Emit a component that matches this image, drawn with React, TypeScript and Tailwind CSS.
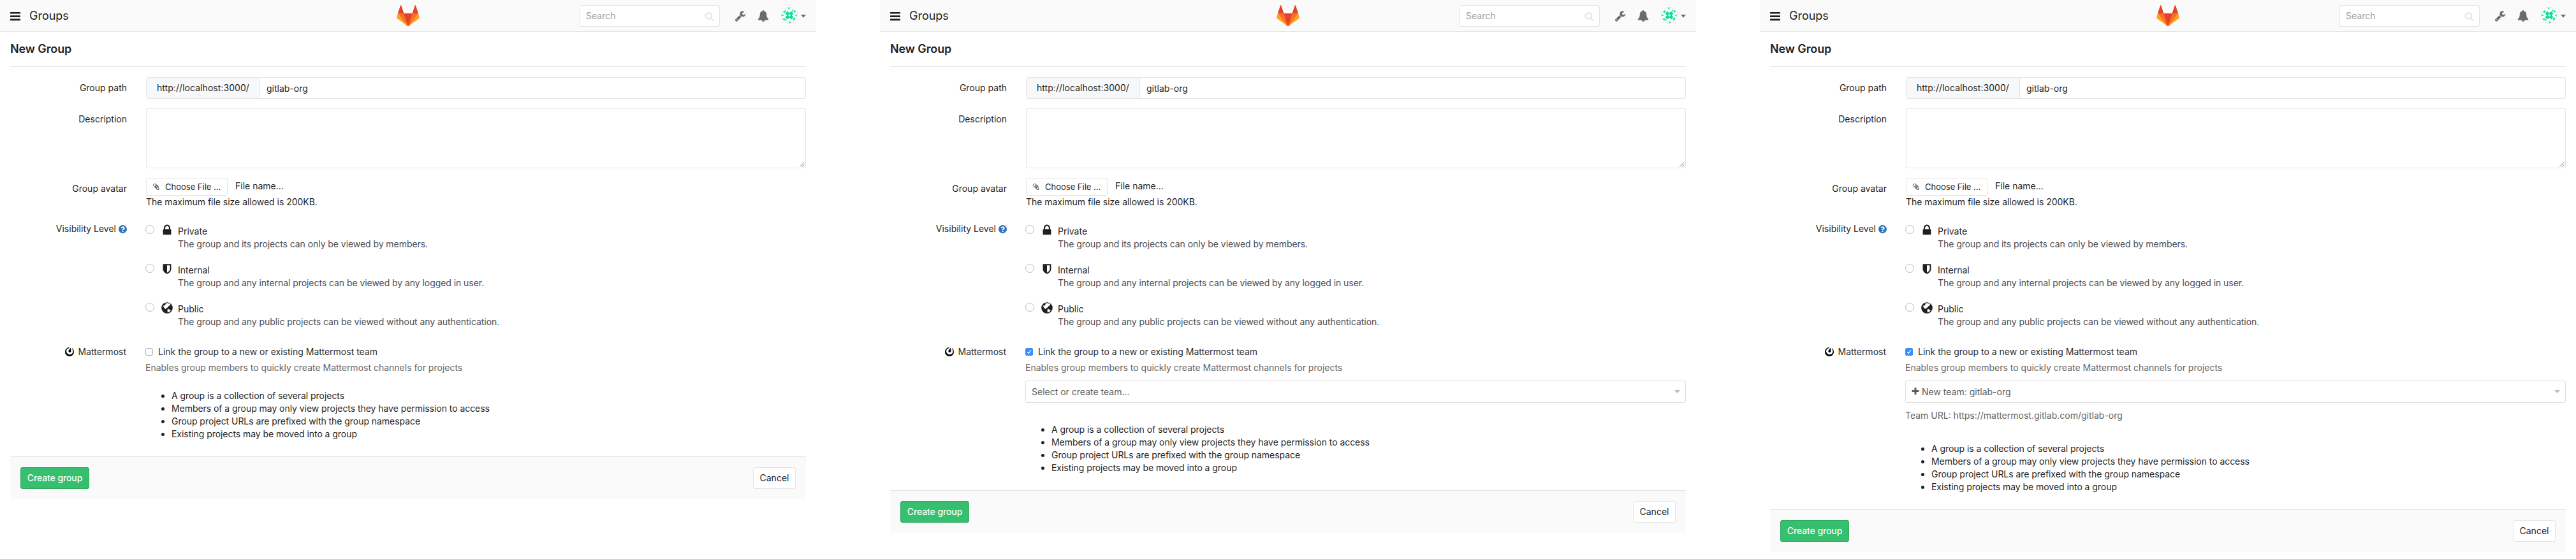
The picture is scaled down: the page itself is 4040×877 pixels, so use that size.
import type { ReactNode } from 'react';
import { SiMattermost } from 'react-icons/si';

type TeamField = 'none' | 'placeholder' | 'new-team';

function Glyph({ d, className }: { d: string; className: string }) {
  return (
    <svg viewBox="0 0 1792 1792" fill="currentColor" className={`shrink-0 ${className}`}>
      <path d={d} />
    </svg>
  );
}

const LOCK =
  'M640 768h512v-192q0-106-75-181t-181-75-181 75-75 181v192zm832 96v576q0 40-28 68t-68 28h-960q-40 0-68-28t-28-68v-576q0-40 28-68t68-28h32v-192q0-184 132-316t316-132 316 132 132 316v192h32q40 0 68 28t28 68z';
const WRENCH =
  'M448 1472q0-26-19-45t-45-19-45 19-19 45 19 45 45 19 45-19 19-45zm644-420l-682 682q-37 37-90 37-52 0-91-37l-106-108q-38-36-38-90 0-53 38-91l681-681q39 98 114.5 173.5t173.5 114.5zm634-435q0 39-23 106-47 134-164.5 217.5t-258.5 83.5q-185 0-316.5-131.5t-131.5-316.5 131.5-316.5 316.5-131.5q58 0 121.5 16.5t107.5 46.5q16 11 16 28t-16 28l-293 169v224l193 107q5-3 79-48.5t135.5-81 70.5-35.5q15 0 23.5 10t8.5 25z';
const BELL =
  'M912 1696q0-16-16-16-59 0-101.5-42.5t-42.5-101.5q0-16-16-16t-16 16q0 73 51.5 124.5t124.5 51.5q16 0 16-16zm816-288q0 52-38 90t-90 38h-448q0 106-75 181t-181 75-181-75-75-181h-448q-52 0-90-38t-38-90q50-42 91-88t85-119.5 74.5-158.5 50-206 19.5-260q0-152 117-282.5t307-158.5q-8-19-8-39 0-40 28-68t68-28 68 28 28 68q0 20-8 39 190 28 307 158.5t117 282.5q0 139 19.5 260t50 206 74.5 158.5 85 119.5 91 88z';
const SEARCH =
  'M1216 832q0-185-131.5-316.5t-316.5-131.5-316.5 131.5-131.5 316.5 131.5 316.5 316.5 131.5 316.5-131.5 131.5-316.5zm512 832q0 52-38 90t-90 38q-54 0-90-38l-343-342q-179 124-399 124-143 0-273.5-55.5t-225-150-150-225-55.5-273.5 55.5-273.5 150-225 225-150 273.5-55.5 273.5 55.5 225 150 150 225 55.5 273.5q0 220-124 399l343 343q37 37 37 90z';
const QUESTION =
  'M1024 1376v-192q0-14-9-23t-23-9h-192q-14 0-23 9t-9 23v192q0 14 9 23t23 9h192q14 0 23-9t9-23zm256-672q0-88-55.5-163t-138.5-116-170-41q-243 0-371 213-15 24 8 42l132 100q7 6 19 6 16 0 25-12 53-68 86-92 34-24 86-24 48 0 85.5 26t37.5 59q0 38-20 61t-68 45q-63 28-115.5 86.5t-52.5 125.5v36q0 14 9 23t23 9h192q14 0 23-9t9-23q0-19 21.5-49.5t54.5-49.5q32-18 49-28.5t46-35 44.5-48 28-60.5 12.5-81zm384 192q0 209-103 385.5t-279.5 279.5-385.5 103-385.5-103-279.5-279.5-103-385.5 103-385.5 279.5-279.5 385.5-103 385.5 103 279.5 279.5 103 385.5z';
const SHIELD =
  'M1344 960v-640h-448v1137q119-63 213-137 235-184 235-360zm192-768v768q0 86-33.5 170.5t-83 150-118 127.5-126.5 103-121 77.5-89.5 49.5-42.5 20q-12 6-26 6t-26-6q-16-7-42.5-20t-89.5-49.5-121-77.5-126.5-103-118-127.5-83-150-33.5-170.5v-768q0-26 19-45t45-19h1152q26 0 45 19t19 45z';
const PLUS =
  'M1600 736v192q0 40-28 68t-68 28h-416v416q0 40-28 68t-68 28h-192q-40 0-68-28t-28-68v-416h-416q-40 0-68-28t-28-68v-192q0-40 28-68t68-28h416v-416q0-40 28-68t68-28h192q40 0 68 28t28 68v416h416q40 0 68 28t28 68z';
const PAPERCLIP =
  'M1596 1385q0 117-79 196t-196 79q-135 0-235-100l-777-776q-113-115-113-271 0-159 110-270t269-111q158 0 273 113l605 606q10 10 10 22 0 16-30.5 46.5t-46.5 30.5q-13 0-23-10l-606-607q-79-77-181-77-106 0-179 75t-73 181q0 105 76 181l776 777q63 63 145 63 64 0 106-42t42-106q0-82-63-145l-581-581q-26-24-60-24-29 0-48 19t-19 48q0 32 25 59l410 410q10 10 10 22 0 16-31 47t-47 31q-12 0-22-10l-410-410q-63-61-63-149 0-82 57-139t139-57q88 0 149 63l581 581q100 98 100 235z';

function Globe() {
  return (
    <svg viewBox="0 0 18 18" className="size-[18px] shrink-0">
      <circle cx="9" cy="9" r="8.8" fill="#1f1f1f" />
      <path
        fill="#fff"
        d="M7 1.8l3.2-.4.8 1 1.4-.6 2.2 1.2-1.2.8 1.2 1.1-2 .4-1.9 2-1.8 1.9-1.6.3-.5 1.5-2.1-1.8-1.9-3 1.4-1.2 1.7.4z"
      />
      <path fill="#fff" d="M9.6 11.6l2-.6 2.2 1.2 1 .7-1.7 2.2-3 1.2-.5-1.9z" />
    </svg>
  );
}

function Tanuki() {
  return (
    <svg viewBox="0 0 36 36" className="size-9 shrink-0">
      <path fill="#e24329" d="M2 14l9.38 9v-9l-4-12.28c-.205-.632-1.176-.632-1.38 0z" />
      <path fill="#e24329" d="M34 14l-9.38 9v-9l4-12.28c.205-.632 1.176-.632 1.38 0z" />
      <path fill="#e24329" d="M18 34.38L3 14h30z" />
      <path fill="#fc6d26" d="M18 34.38L11.38 14H2l4 11z" />
      <path fill="#fc6d26" d="M18 34.38L24.62 14H34l-4 11z" />
      <path fill="#fca326" d="M2 14L.1 20.16c-.18.565 0 1.2.5 1.56L18 34.38z" />
      <path fill="#fca326" d="M34 14l1.9 6.16c.18.565 0 1.2-.5 1.56L18 34.38z" />
    </svg>
  );
}

function Identicon() {
  return (
    <svg viewBox="0 0 76 76" className="size-[26px] shrink-0">
      <circle cx="38" cy="38" r="36.5" fill="#fff" stroke="#dcdcdc" strokeWidth="2.6" />
      <g fill="#10dd9a">
        <path d="M29 19l9 8 9-8 10 10-8 9 8 9-10 10-9-8-9 8-10-10 8-9-8-9z" />
        <path d="M31 3l10 1-5 9zM51 11l1 10 9-2zM60 14l9 8-10 4zM73 35l-11 1 9 8z" />
        <path d="M45 73l-10-1 5-9zM25 65l-1-10-9 2zM16 62l-9-8 10-4zM3 41l11-1-9-8z" />
        <path d="M10 22l10-9 2 8-9 8zM66 54l-10 9-2-8 9-8z" />
      </g>
      <path fill="#fff" d="M38 32l6 6-6 6-6-6z" />
    </svg>
  );
}

function Header() {
  return (
    <header className="flex h-[50px] items-center border-b border-[#e5e5e5] bg-[#fafafa] pl-4">
      <svg viewBox="0 0 16 14" className="mt-0.5 h-3.5 w-4 shrink-0" fill="#1f1f1f">
        <rect y="0" width="16" height="2.6" rx="0.6" />
        <rect y="5.3" width="16" height="2.6" rx="0.6" />
        <rect y="10.6" width="16" height="2.6" rx="0.6" />
      </svg>
      <div className="ml-3.5 w-[576px] shrink-0 text-lg">Groups</div>
      <Tanuki />
      <div className="ml-[251px] mt-px flex h-[34px] w-[220px] shrink-0 items-center justify-between rounded-[3px] border border-[#e5e5e5] bg-white pl-[9px] pr-2">
        <span className="text-[#a0a0a0]">Search</span>
        <Glyph d={SEARCH} className="size-[15px] text-[#e3e5e9]" />
      </div>
      <Glyph d={WRENCH} className="ml-[23px] size-[18px] text-[#6b6b6b]" />
      <Glyph d={BELL} className="ml-[18px] size-[18px] text-[#6b6b6b]" />
      <div className="-mt-0.5 ml-[19px] flex shrink-0 items-center">
        <Identicon />
        <svg viewBox="0 0 8 5" className="ml-[5px] mt-1 h-[5px] w-2" fill="#6b6b6b">
          <path d="M0 0h8L4 4.8z" />
        </svg>
      </div>
    </header>
  );
}

function Row({ label, className, children }: { label: ReactNode; className: string; children: ReactNode }) {
  return (
    <div className={`flex ${className}`}>
      <div className="mt-[7px] flex h-5 w-[183px] shrink-0 items-center justify-end">{label}</div>
      {children}
    </div>
  );
}

function Level({ icon, title, text }: { icon: ReactNode; title: string; text: string }) {
  return (
    <div className="flex h-10">
      <span className="size-3.5 shrink-0 rounded-full border border-[#bdbdbd] bg-white" />
      <span className="-mt-px ml-[11px] flex h-[18px] w-[18px] shrink-0 items-center justify-center">{icon}</span>
      <div className="ml-2 leading-5">
        <div>{title}</div>
        <div className="tracking-[-0.06px] text-[#4c4e54]">{text}</div>
      </div>
    </div>
  );
}

function TeamSelect({ children }: { children: ReactNode }) {
  return (
    <div className="mt-2.5 flex h-[35px] items-center justify-between rounded-[3px] border border-[#e0e0e0] pl-[9px] pr-2 text-[#5c5c5c]">
      <span className="flex items-center">{children}</span>
      <svg viewBox="0 0 9 5" className="h-[5px] w-[9px]" fill="#bdbdbd">
        <path d="M0 0h9L4.5 5z" />
      </svg>
    </div>
  );
}

const RULES = [
  'A group is a collection of several projects',
  'Members of a group may only view projects they have permission to access',
  'Group project URLs are prefixed with the group namespace',
  'Existing projects may be moved into a group',
];

function NewGroup({ team }: { team: TeamField }) {
  return (
    <section className="w-[1280px] shrink-0">
      <Header />
      <main className="px-4">
        <h1 className="flex h-[55px] items-center border-b border-[#e5e5e5] text-lg font-semibold tracking-[-0.1px]">
          New Group
        </h1>

        <Row label="Group path" className="mt-4">
          <div className="ml-[30px] flex h-[34px] flex-1 rounded-[3px] border border-[#e5e5e5]">
            <div className="flex w-[178px] items-center rounded-l-[2px] border-r border-[#e5e5e5] bg-[#f7f8fa] pl-4 tracking-[0.05px]">
              http://localhost:3000/
            </div>
            <div className="flex items-center pl-2.5 pt-px">gitlab-org</div>
          </div>
        </Row>

        <Row label="Description" className="mt-[15px]">
          <div className="ml-[30px] flex h-[94px] flex-1 items-end justify-end rounded-[3px] border border-[#e5e5e5]">
            <svg viewBox="0 0 8 8" className="m-px size-2" stroke="#6f6f6f" strokeWidth="1" fill="none">
              <path d="M0.5 7.5l6.5-7M4.5 7.5l2.8-3" />
            </svg>
          </div>
        </Row>

        <Row label="Group avatar" className="mt-[15px]">
          <div className="ml-[30px]">
            <div className="flex">
              <div className="flex h-7 w-32 items-center rounded-[3px] border border-[#e5e5e5] pl-[9px] text-[13px]">
                <Glyph d={PAPERCLIP} className="size-3 text-[#3a3a3a]" />
                <span className="ml-2">Choose File ...</span>
              </div>
              <span className="ml-3 flex h-[26px] items-center">File name...</span>
            </div>
            <p className="tracking-[-0.03px]">The maximum file size allowed is 200KB.</p>
          </div>
        </Row>

        <Row
          label={
            <>
              Visibility Level
              <Glyph d={QUESTION} className="-mr-px ml-[3px] size-[15px] text-[#2d74b8]" />
            </>
          }
          className="mt-[15px]"
        >
          <div className="ml-[29px] flex flex-col gap-[21px] pt-[11px]">
            <Level
              icon={<Glyph d={LOCK} className="-mt-px size-5" />}
              title="Private"
              text="The group and its projects can only be viewed by members."
            />
            <Level
              icon={<Glyph d={SHIELD} className="size-[18px]" />}
              title="Internal"
              text="The group and any internal projects can be viewed by any logged in user."
            />
            <Level
              icon={<Globe />}
              title="Public"
              text="The group and any public projects can be viewed without any authentication."
            />
          </div>
        </Row>

        <Row
          label={
            <span className="mr-px flex items-center text-[#2e2e2e]">
              <SiMattermost className="mr-[7px] size-3.5 text-black" />
              Mattermost
            </span>
          }
          className="mt-5"
        >
          <div className="ml-[29px] flex-1 pt-[7px] text-[#2e2e2e]">
            <div className="flex h-5 items-center">
              {team === 'none' ? (
                <span className="size-3 rounded-[3px] border border-[#b0b0b0] bg-white" />
              ) : (
                <svg viewBox="0 0 12 12" className="size-3">
                  <rect width="12" height="12" rx="2.5" fill="#3390fc" />
                  <path d="M3.2 6.4l2 2.1 3.6-5.2" fill="none" stroke="#fff" strokeWidth="1.3" />
                </svg>
              )}
              <span className="ml-2">Link the group to a new or existing Mattermost team</span>
            </div>
            <p className="mt-[5px] text-[#666]">
              Enables group members to quickly create Mattermost channels for projects
            </p>
            {team === 'placeholder' && <TeamSelect>Select or create team...</TeamSelect>}
            {team === 'new-team' && (
              <>
                <TeamSelect>
                  <Glyph d={PLUS} className="-ml-px -mt-px mr-[3px] size-3.5" />
                  New team: gitlab-org
                </TeamSelect>
                <p className="mt-2.5 text-[#666]">Team URL: https://mattermost.gitlab.com/gitlab-org</p>
              </>
            )}
          </div>
        </Row>

        <ul className={`ml-[237px] tracking-[-0.05px] ${team === 'none' ? 'mt-6' : 'mt-8'}`}>
          {RULES.map((rule) => (
            <li key={rule} className="flex h-5 items-center">
              <span className="mr-[11px] size-[5px] rounded-full bg-[#1f1f1f]" />
              {rule}
            </li>
          ))}
        </ul>

        <footer className="mt-[25px] flex h-[67px] items-center justify-between border-t border-[#e5e5e5] bg-[#fafafa] px-4">
          <button className="h-[34px] w-[108px] rounded-[3px] border border-[#2faa60] bg-[#36bf6e] font-medium tracking-[-0.1px] text-white">
            Create group
          </button>
          <button className="h-[34px] w-[67px] rounded-[3px] border border-[#e5e5e5] bg-white">Cancel</button>
        </footer>
      </main>
    </section>
  );
}

export default function App() {
  return (
    <div className="flex h-[877px] w-[4040px] gap-[100px] overflow-hidden whitespace-nowrap bg-white font-[Inter,'Liberation_Sans',sans-serif] text-sm leading-5 text-[#1f1f1f]">
      <NewGroup team="none" />
      <NewGroup team="placeholder" />
      <NewGroup team="new-team" />
    </div>
  );
}
